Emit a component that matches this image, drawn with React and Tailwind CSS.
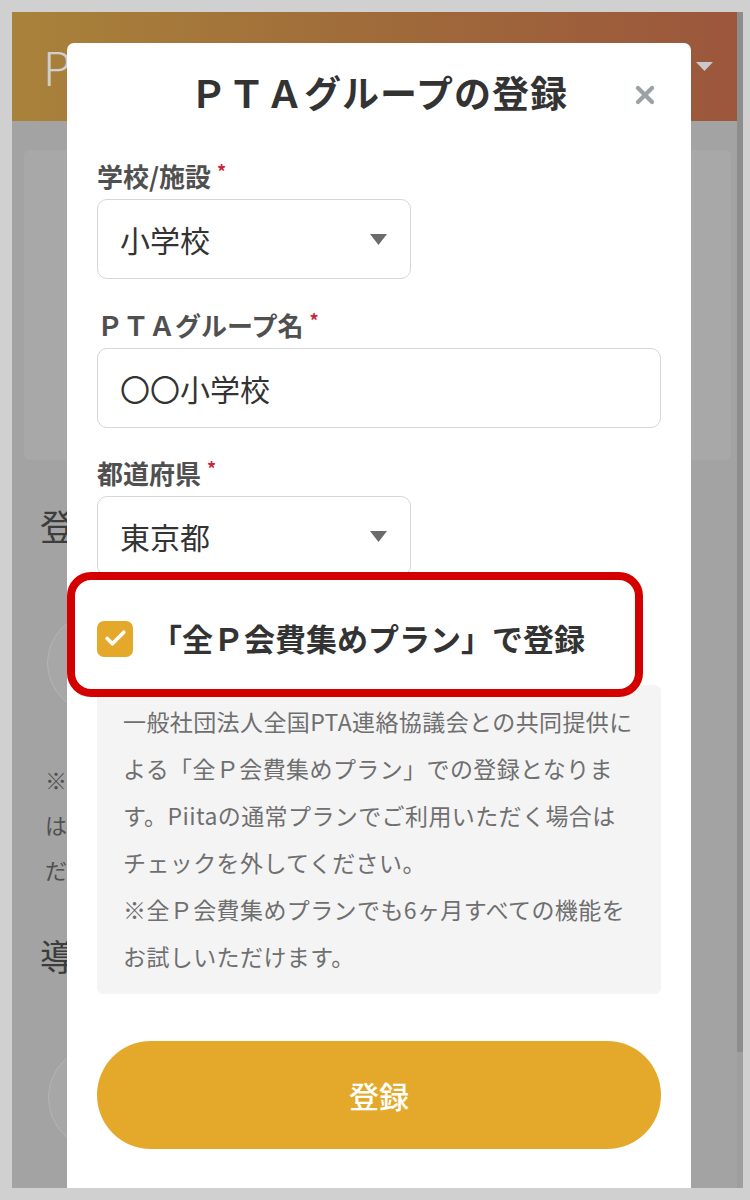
import { Check, X } from 'lucide-react';

const JP = { fontFamily: '"Noto Sans CJK JP", "Noto Sans", sans-serif' };

const INFO_LINES = [
  '一般社団法人全国PTA連絡協議会との共同提供に',
  'よる「全Ｐ会費集めプラン」での登録となりま',
  'す。Piitaの通常プランでご利用いただく場合は',
  'チェックを外してください。',
  '※全Ｐ会費集めプランでも6ヶ月すべての機能を',
  'お試しいただけます。',
];

function Label({ children }) {
  return (
    <div className="flex items-start h-[32px] text-[26px] leading-[32px] font-bold text-[#505050]">
      <span>{children}</span>
      <span className="ml-[6px] text-[18px] leading-[22px] text-[#c8283a]">*</span>
    </div>
  );
}

function Caret() {
  return (
    <svg width="17" height="11" viewBox="0 0 17 11" className="shrink-0">
      <path d="M0 0 L17 0 L8.5 11 Z" fill="#6b6b6b" />
    </svg>
  );
}

function SelectBox({ value }) {
  return (
    <div className="mt-[7px] w-[314px] h-[80px] rounded-[10px] border border-[#d6d6d6] bg-white flex items-center justify-between pl-[22px] pr-[23px]">
      <span className="text-[30px] text-[#333]">{value}</span>
      <Caret />
    </div>
  );
}

// dimmed page behind the modal; only its left strip shows
function Backdrop() {
  return (
    <div className="h-full">
      <div className="h-[109px] bg-linear-to-r from-[#a9823a] via-[#9f6b3a] to-[#9c563c] flex items-center justify-between pl-[31px] pr-[30px]">
        <span className="text-[46px] font-light text-[#cfcfcf]">P</span>
        <svg width="17" height="9" viewBox="0 0 17 9">
          <path d="M0 0 L17 0 L8.5 9 Z" fill="#c9c9c9" />
        </svg>
      </div>
      <div className="mt-[29px] mx-[12px] h-[310px] bg-[#a8a8a8] rounded-md" />
      <div className="mt-[43px] pl-[28px] text-[36px] leading-[44px] text-[#3c3c3c]">登</div>
      <div className="mt-[66px] ml-[35px] w-[640px] h-[100px] rounded-full border border-[#b4b4b4] bg-[#a7a7a7]" />
      <div className="mt-[44px] pl-[33px] text-[22px] leading-[45px] text-[#505050]">
        <div>※</div>
        <div>は</div>
        <div>だ</div>
      </div>
      <div className="mt-[41px] pl-[28px] text-[36px] leading-[44px] text-[#3c3c3c]">導</div>
      <div className="mt-[68px] ml-[36px] w-[640px] h-[105px] rounded-full border border-[#b4b4b4] bg-[#a7a7a7]" />
    </div>
  );
}

export default function App() {
  return (
    <div className="w-[750px] h-[1200px] bg-[#d0d0d0] pt-[12px] pl-[12px] pr-[7px] pb-[12px]" style={JP}>
      <div className="relative h-full overflow-hidden bg-[#a3a3a3]">
        <Backdrop />

        {/* scrollbar */}
        <div className="absolute right-0 top-0 bottom-0 w-[6px] bg-[#9e9e9e]">
          <div className="h-[1040px] bg-[#8d8d8d]" />
        </div>

        {/* modal */}
        <div className="absolute left-[55px] top-[31px] bottom-0 w-[624px] bg-white rounded-t-[7px] px-[30px]">
          <div className="relative pt-[26px]">
            <h1 className="text-center text-[37px] leading-[46px] font-bold text-[#333] tracking-[1px]">
              ＰＴＡグループの登録
            </h1>
            <X
              size={28}
              strokeWidth={3.6}
              className="absolute right-[2px] top-[38px] text-[#9aa2a6]"
            />
          </div>

          <div className="mt-[45px]">
            <Label>学校/施設</Label>
            <SelectBox value="小学校" />
          </div>

          <div className="mt-[30px]">
            <Label>ＰＴＡグループ名</Label>
            <div className="mt-[7px] h-[80px] rounded-[10px] border border-[#d6d6d6] bg-white flex items-center pl-[22px]">
              <span className="text-[30px] text-[#333]">〇〇小学校</span>
            </div>
          </div>

          <div className="mt-[29px]">
            <Label>都道府県</Label>
            <SelectBox value="東京都" />
          </div>

          <div className="relative z-10 -mt-[4px] -ml-[30px] w-[576px] h-[125px] border-[8px] border-[#d40000] rounded-[24px] bg-white flex items-center pl-[22px] pt-[8px]">
            <div className="w-[36px] h-[36px] rounded-[7px] bg-[#e4a82b] flex items-center justify-center shrink-0">
              <Check size={25} strokeWidth={3.5} className="text-white" />
            </div>
            <span className="ml-[18px] text-[31px] font-bold text-[#333] whitespace-nowrap">
              「全Ｐ会費集めプラン」で登録
            </span>
          </div>

          <div className="-mt-[12px] h-[309px] rounded-[6px] bg-[#f4f4f5] pl-[26px] pt-[13px] text-[23px] leading-[47px] tracking-[0.4px] text-[#6f6f6f]">
            {INFO_LINES.map((line) => (
              <div key={line} className="whitespace-nowrap">{line}</div>
            ))}
          </div>

          <button className="mt-[47px] w-full h-[108px] rounded-full bg-[#e4a92a] text-white text-[30px] font-medium">
            登録
          </button>
        </div>
      </div>
    </div>
  );
}
